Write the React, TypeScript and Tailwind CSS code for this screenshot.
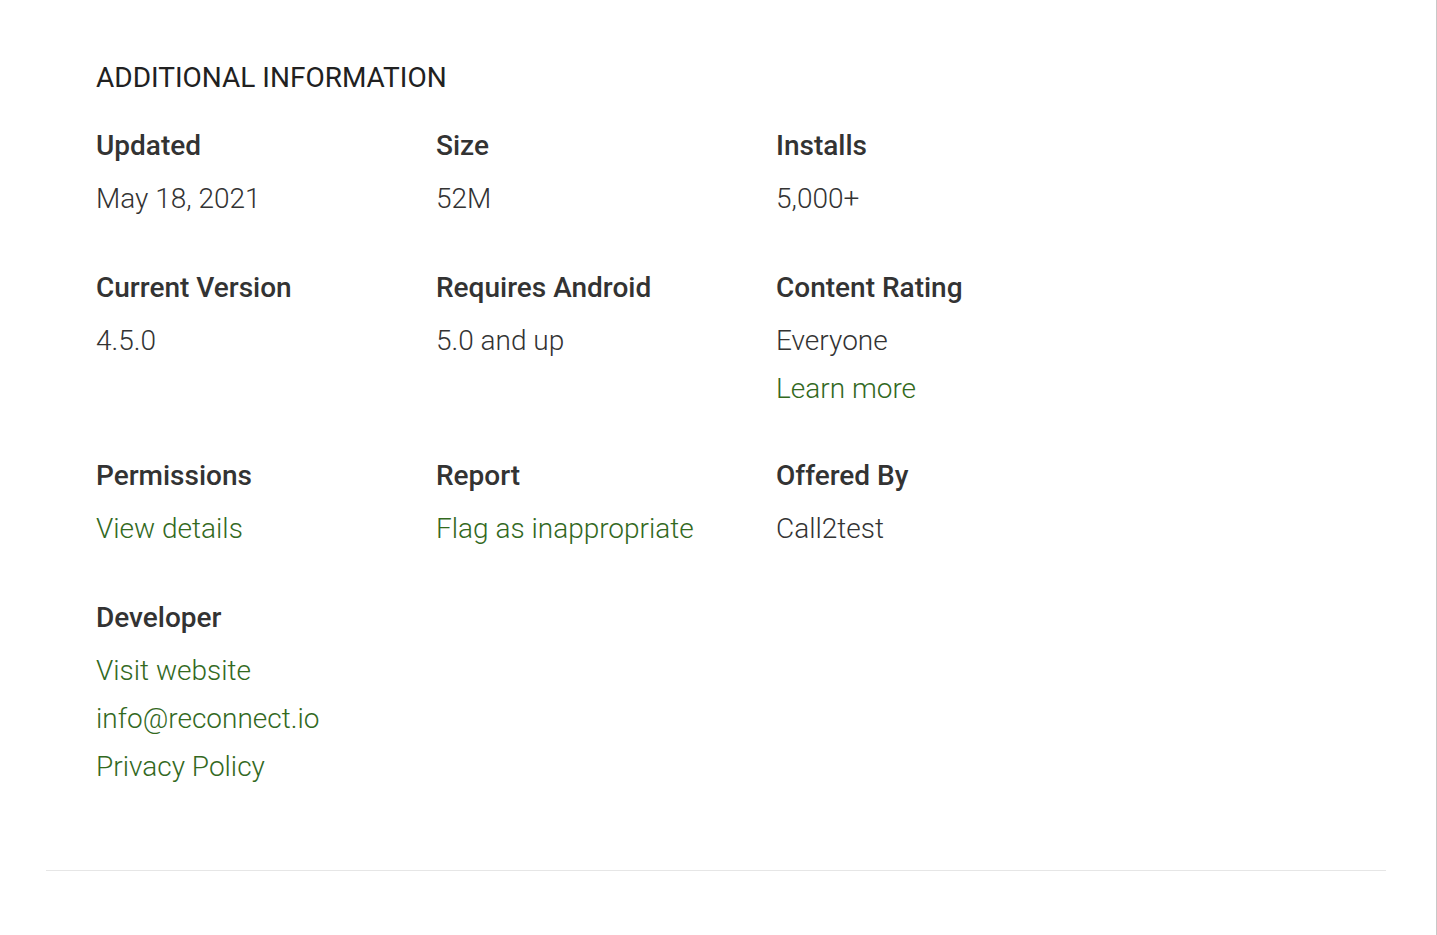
import React from "react";

const Label = ({ children }: { children: React.ReactNode }) => (
  <div className="text-[28px] font-medium leading-[32px] mb-[13px] text-[#333333]">{children}</div>
);

const Val = ({ children, link, tight }: { children: React.ReactNode; link?: boolean; tight?: boolean }) => (
  <div
    className={
      (link ? "text-[#33691e]" : "text-[#333333]") +
      " text-[28px] font-light leading-[48px]" +
      (tight ? " -mb-[2px]" : "")
    }
  >
    {children}
  </div>
);

export default function App() {
  const cells: { label: string; values: { t: string; link?: boolean; tight?: boolean }[] }[] = [
    { label: "Updated", values: [{ t: "May 18, 2021" }] },
    { label: "Size", values: [{ t: "52M" }] },
    { label: "Installs", values: [{ t: "5,000+" }] },
    { label: "Current Version", values: [{ t: "4.5.0" }] },
    { label: "Requires Android", values: [{ t: "5.0 and up" }] },
    { label: "Content Rating", values: [{ t: "Everyone" }, { t: "Learn more", link: true, tight: true }] },
    { label: "Permissions", values: [{ t: "View details", link: true }] },
    { label: "Report", values: [{ t: "Flag as inappropriate", link: true }] },
    { label: "Offered By", values: [{ t: "Call2test" }] },
    {
      label: "Developer",
      values: [
        { t: "Visit website", link: true },
        { t: "info@reconnect.io", link: true },
        { t: "Privacy Policy", link: true },
      ],
    },
  ];
  return (
    <div className="flex min-h-[935px] bg-white" style={{ fontFamily: "Roboto, 'Liberation Sans', sans-serif" }}>
      <div className="w-[1437px] shrink-0 border-r border-[#c8c8c8]">
        <div className="mx-[46px] w-[1340px] border-b border-[#e6e6e6] pt-[62px] pb-[79px] pl-[50px]">
          <h2 className="text-[28px] leading-[32px] font-normal text-[#212121] mb-[36px]">ADDITIONAL INFORMATION</h2>
          <div className="grid grid-cols-[340px_340px_340px] gap-y-[49px]">
            {cells.map((c) => (
              <div key={c.label}>
                <Label>{c.label}</Label>
                {c.values.map((v) => (
                  <Val key={v.t} link={v.link} tight={v.tight}>
                    {v.t}
                  </Val>
                ))}
              </div>
            ))}
          </div>
        </div>
      </div>
    </div>
  );
}
